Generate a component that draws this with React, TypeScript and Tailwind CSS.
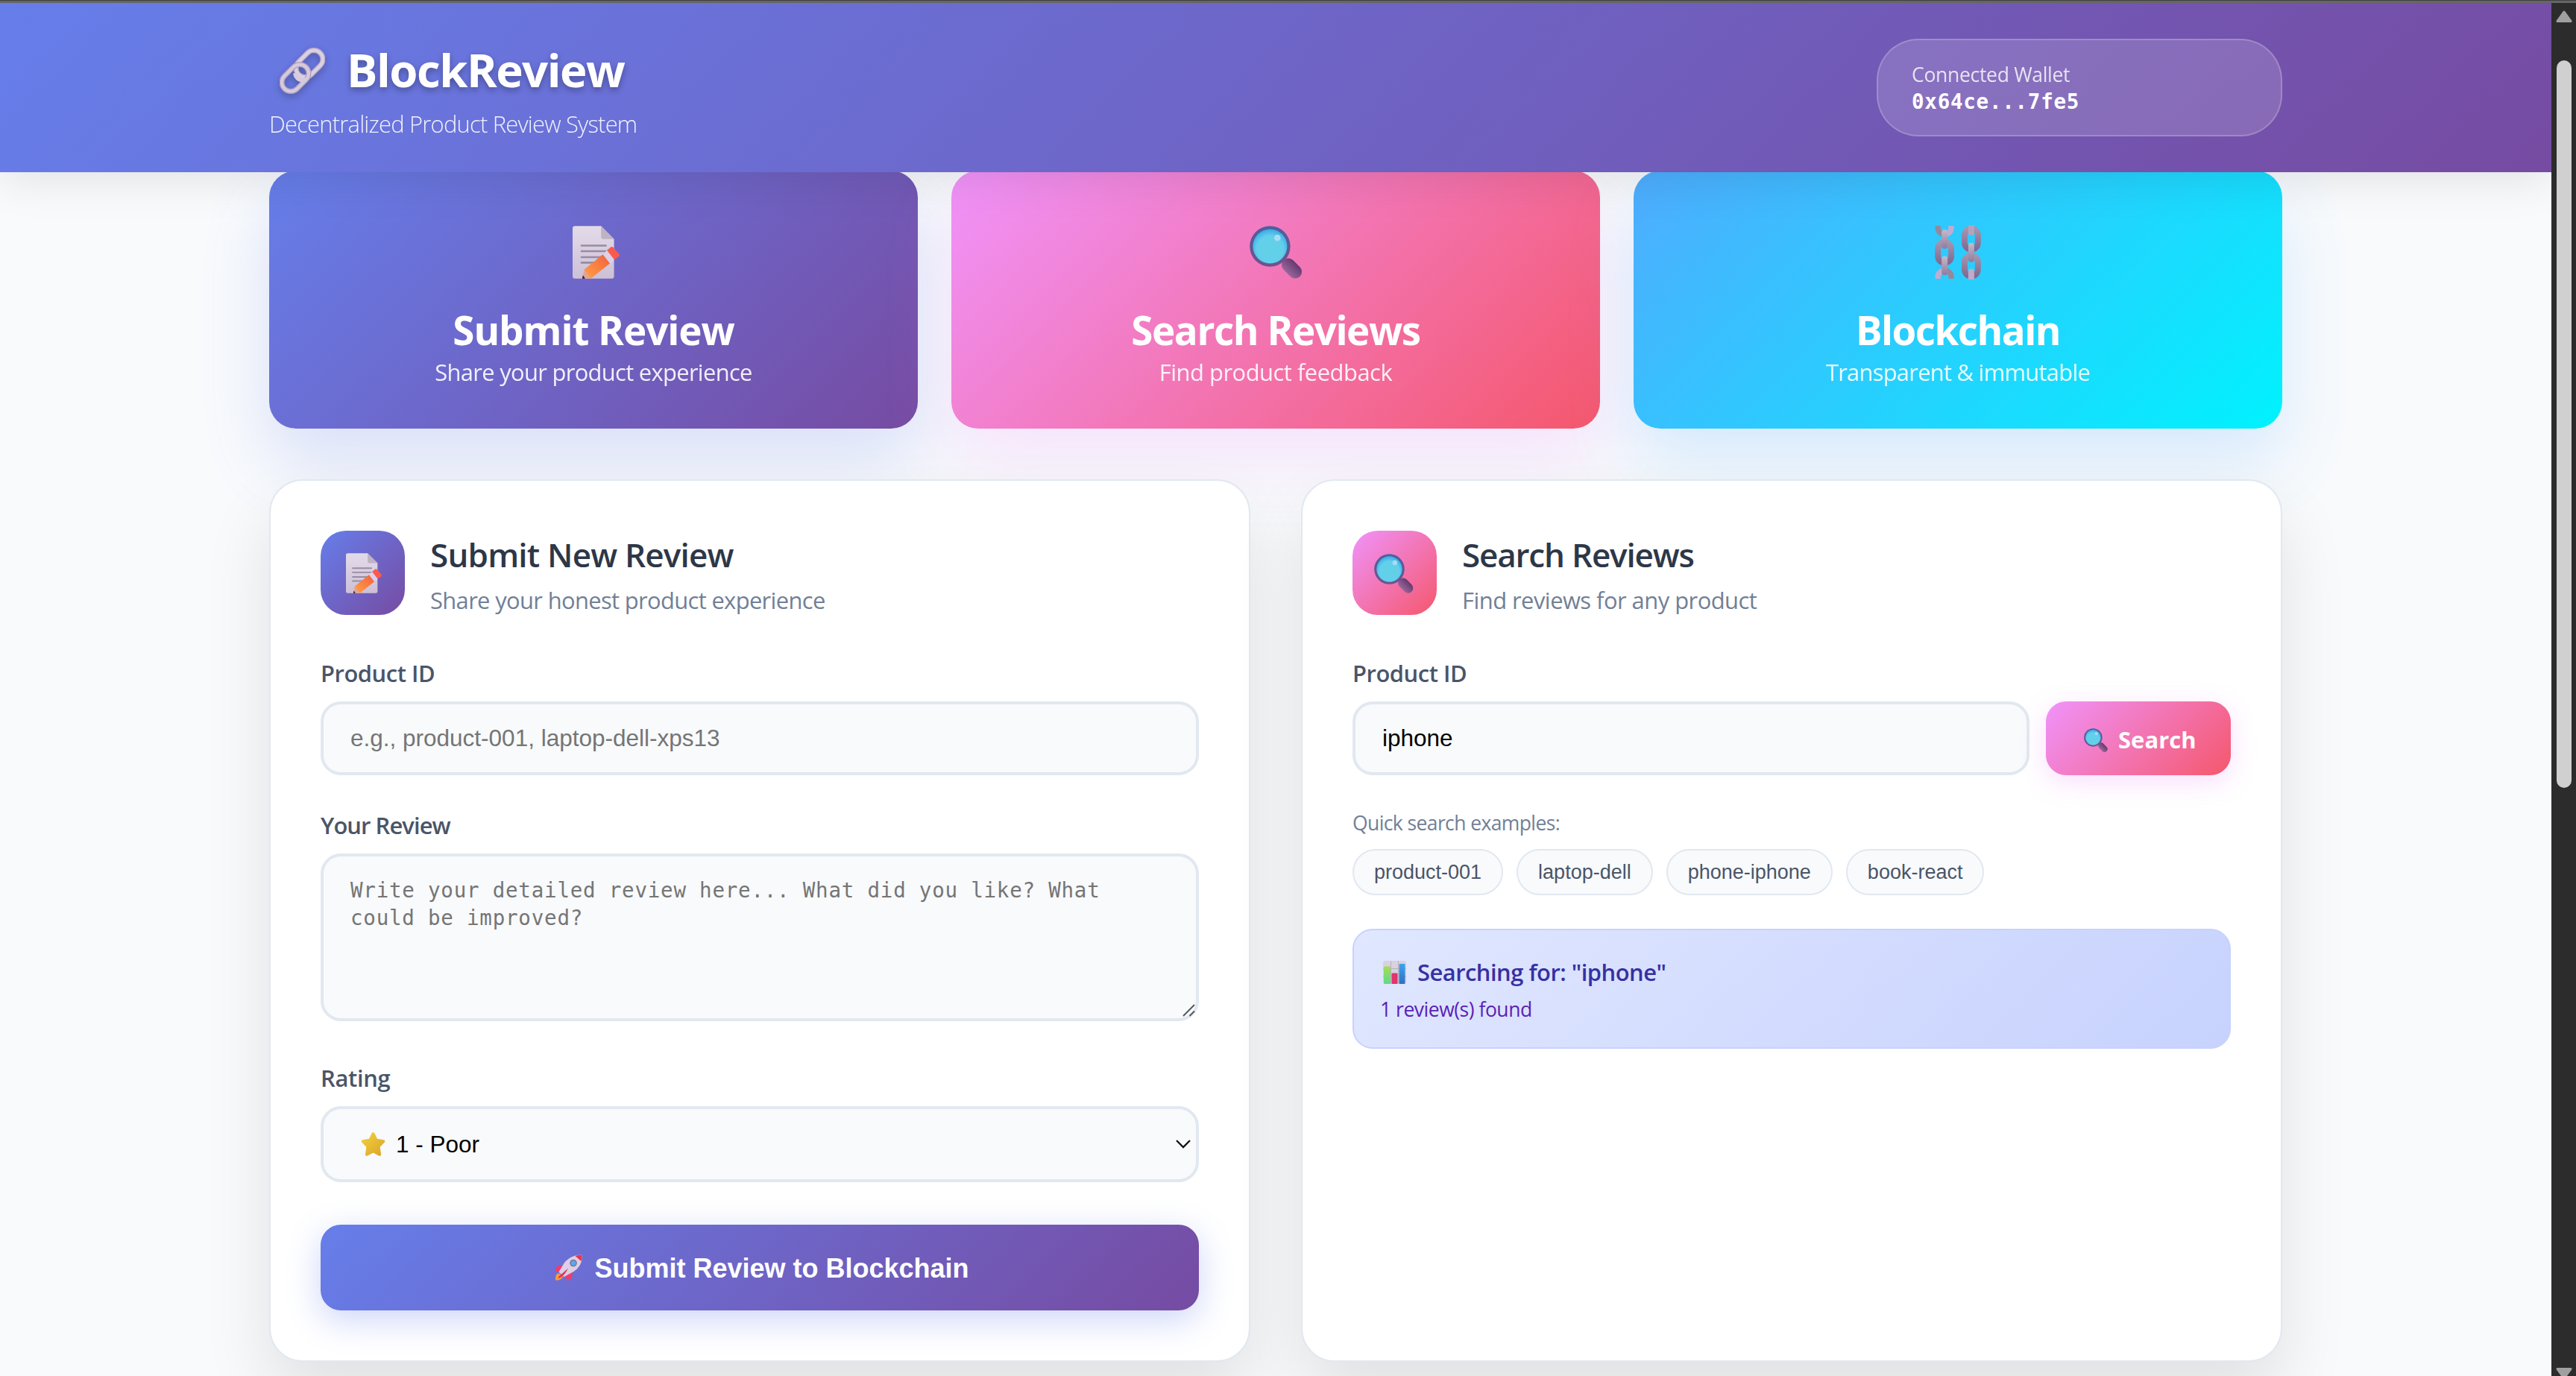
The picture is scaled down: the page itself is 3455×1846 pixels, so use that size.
import type { ReactNode } from "react";

function LinkIcon({ className }: { className: string }) {
  return (
    <svg viewBox="0 0 61 62" className={className} fill="none">
      <g transform="rotate(-45 40 21.5)">
        <rect x="19.5" y="9.5" width="41" height="24" rx="12" stroke="#bdaec8" strokeWidth="7" />
        <rect x="19.5" y="9.5" width="41" height="24" rx="12" stroke="#dbd1e2" strokeWidth="4" />
      </g>
      <g transform="rotate(-45 21 40.5)">
        <rect x="0.5" y="28.5" width="41" height="24" rx="12" stroke="#b3a3bf" strokeWidth="7" />
        <rect x="0.5" y="28.5" width="41" height="24" rx="12" stroke="#d6cbde" strokeWidth="4" />
      </g>
      <path d="M21 34c1 7 7 11 14 9" stroke="#d6cbde" strokeWidth="6" />
    </svg>
  );
}

function MemoIcon({ className }: { className: string }) {
  return (
    <svg viewBox="0 0 63.5 71" className={className}>
      <defs>
        <linearGradient id="mpage" x1="0" y1="0" x2="0" y2="1">
          <stop offset="0" stopColor="#e3dbe9" />
          <stop offset="1" stopColor="#cdc0d6" />
        </linearGradient>
        <linearGradient id="mpen" x1="0" y1="1" x2="1" y2="0">
          <stop offset="0.1" stopColor="#ff9a45" />
          <stop offset="1" stopColor="#f2603c" />
        </linearGradient>
      </defs>
      <path d="M3 0H38.5L56 17.5V68a3 3 0 0 1-3 3H3a3 3 0 0 1-3-3V3a3 3 0 0 1 3-3Z" fill="url(#mpage)" />
      <path d="M38.5 0 56 17.5H41a2.500 2.500 0 0 1-2.500-2.500Z" fill="#bdb3c4" />
      <g stroke="#968da3" strokeWidth="2.600" strokeLinecap="round">
        <path d="M12 26.500H45M12 34H45M12 42H38M12 49.500H29" />
      </g>
      <path d="M13 71 15.800 58.500 25 71Z" fill="#e3a48f" />
      <path d="M13 71 14 66.500 17 71Z" fill="#35143f" />
      <path d="M15.800 58.700 41 38.300 50.500 50.300 24.600 71Z" fill="url(#mpen)" />
      <path d="M41 38.300 46.400 32.700 56.300 45.300 50.500 50.300Z" fill="#ddd0ea" />
      <path d="M46.400 32.700 51.500 28.500Q53.500 27.300 55 29L62.500 37.200Q64 39 62.500 41L56.300 45.300Z" fill="#fb5a4b" />
    </svg>
  );
}

function LensIcon({ className }: { className: string }) {
  return (
    <svg viewBox="0 0 71 71" className={className}>
      <defs>
        <linearGradient id="lring" x1="0" y1="0" x2="0" y2="1">
          <stop offset="0" stopColor="#48629c" />
          <stop offset="1" stopColor="#74508c" />
        </linearGradient>
        <radialGradient id="lglass" cx="0.5" cy="0.58" r="0.55">
          <stop offset="0.7" stopColor="#63d0ea" />
          <stop offset="1" stopColor="#41aeea" />
        </radialGradient>
        <linearGradient id="lhand" x1="0" y1="0" x2="0" y2="1">
          <stop offset="0" stopColor="#653a70" />
          <stop offset="1" stopColor="#9a6699" />
        </linearGradient>
      </defs>
      <rect x="41" y="48" width="31" height="18" rx="9" transform="rotate(45 56.500 57)" fill="url(#lhand)" />
      <circle cx="27.400" cy="27.500" r="27.200" fill="url(#lring)" />
      <circle cx="27.400" cy="27.500" r="23" fill="url(#lglass)" />
      <circle cx="37.300" cy="16" r="4.300" fill="#a9dcf3" />
    </svg>
  );
}

function ChainsIcon({ className }: { className: string }) {
  return (
    <svg viewBox="0 0 62 73.500" className={className} fill="none">
      <defs>
        <linearGradient id="cbig" x1="0" y1="0" x2="0" y2="1">
          <stop offset="0" stopColor="#a595ae" />
          <stop offset="1" stopColor="#806a92" />
        </linearGradient>
        <linearGradient id="csm" x1="0" y1="0" x2="0" y2="1">
          <stop offset="0" stopColor="#c3bccb" />
          <stop offset="1" stopColor="#8f7a9e" />
        </linearGradient>
      </defs>
      <path d="M4 1V3C4 9 8 12.500 13 12.500" stroke="#94899c" strokeWidth="7.500" />
      <path d="M22 1V3C22 9 18 12.500 13 12.500" stroke="#c0acd3" strokeWidth="7.500" />
      <path d="M4 72.500V70C4 65 8 61.500 13 61.500" stroke="#c0acd3" strokeWidth="7.500" />
      <path d="M22 72.500V70C22 65 18 61.500 13 61.500" stroke="#94899c" strokeWidth="7.500" />
      <rect x="4" y="23" width="18" height="28" rx="9" stroke="url(#cbig)" strokeWidth="8" />
      <rect x="40" y="4.800" width="18" height="28" rx="9" stroke="url(#cbig)" strokeWidth="8" />
      <rect x="40" y="41" width="18" height="28" rx="9" stroke="url(#cbig)" strokeWidth="8" />
      <g fill="url(#csm)">
        <rect x="9" y="6" width="8" height="26" rx="4" />
        <rect x="9" y="41.700" width="8" height="26" rx="4" />
        <rect x="45" y="24" width="8" height="26" rx="4" />
      </g>
      <path d="M45 0H53V10a4 4 0 0 1-8 0Z" fill="#b3a3bf" />
      <path d="M45 73.500H53V63a4 4 0 0 0-8 0Z" fill="#bfabcb" />
    </svg>
  );
}

function ChartIcon({ className }: { className: string }) {
  return (
    <svg viewBox="0 0 31 31" className={className}>
      <defs>
        <linearGradient id="gbar" x1="0" y1="0" x2="0" y2="1">
          <stop offset="0" stopColor="#a5dd55" />
          <stop offset="1" stopColor="#5ed98a" />
        </linearGradient>
        <linearGradient id="bbar" x1="0" y1="0" x2="0" y2="1">
          <stop offset="0" stopColor="#3aa5ee" />
          <stop offset="1" stopColor="#2f6fc4" />
        </linearGradient>
      </defs>
      <rect width="31" height="31" rx="3" fill="#d8d1de" />
      <path d="M10.500 0V31M20.500 0V31M0 10.500H31M0 21H31" stroke="#b9b0c1" strokeWidth="1" />
      <rect x="1" y="7.500" width="9" height="23.500" rx="1" fill="url(#gbar)" />
      <rect x="11.500" y="16.500" width="8" height="14.500" rx="1" fill="#e2336f" />
      <rect x="21.500" y="4" width="8" height="27" rx="1" fill="url(#bbar)" />
    </svg>
  );
}

function StarIcon({ className }: { className: string }) {
  return (
    <svg viewBox="0 0 32 32" className={className}>
      <defs>
        <linearGradient id="star" x1="0" y1="0" x2="1" y2="1">
          <stop offset="0" stopColor="#f3cf3a" />
          <stop offset="1" stopColor="#dba62c" />
        </linearGradient>
      </defs>
      <path
        d="M16 2.200 20 10.300 29.300 11.800 22.800 18.600 24.300 28.800 16 24.500 7.700 28.800 9.200 18.600 2.700 11.800 12 10.300Z"
        fill="url(#star)"
        stroke="url(#star)"
        strokeWidth="4"
        strokeLinejoin="round"
      />
    </svg>
  );
}

function RocketIcon({ className }: { className: string }) {
  return (
    <svg viewBox="0 0 37 35" className={className}>
      <path d="M1 34.500Q0 27 5 25L11.500 29Q9 35 1 34.500Z" fill="#fb9a3c" />
      <path d="M1 19Q4 12.500 15 15.500L10 23 1 22Q0 20.500 1 19Z" fill="#ee3d6d" />
      <path d="M20 34Q26 29 22.500 20L13 26 16.500 34Q18 35.500 20 34Z" fill="#ee3d6d" />
      <path d="M36.500 0.500Q38 14 26 22.500L12.500 30 5.500 23.500 13 11Q22 0 36.500 0.500Z" fill="#dccfe6" />
      <path d="M36.500 0.500Q37 5 35.500 9L27.500 2Q31 0.300 36.500 0.500Z" fill="#e8354f" />
      <path d="M18 18.500 5.500 29.500Q3.500 31.500 6.500 31.500 13 29 18 18.500Z" fill="#e2315f" />
      <circle cx="25" cy="11.500" r="4.800" fill="#7c7390" />
      <circle cx="25" cy="11.500" r="3.300" fill="#58a8f2" />
    </svg>
  );
}

function ActionCard({
  icon,
  title,
  text,
  className,
  titleClass,
  textClass,
}: {
  icon: ReactNode;
  title: string;
  text: string;
  className: string;
  titleClass: string;
  textClass: string;
}) {
  return (
    <div className={`flex h-[346px] flex-1 flex-col items-center rounded-[36px] pt-[73px] text-white ${className}`}>
      <div className="flex h-[73px] items-center">{icon}</div>
      <h3 className={`mt-[31px] text-[52.900px] leading-[72px] font-bold ${titleClass}`}>{title}</h3>
      <p className={`text-[30.900px] leading-[42px] opacity-90 ${textClass}`}>{text}</p>
    </div>
  );
}

function Panel({ children }: { children: ReactNode }) {
  return (
    <section className="h-[1184px] w-[1316px] rounded-[45px] border-2 border-[#e2e8f0] bg-white px-[67px] pt-[67px] shadow-[0_45px_90px_rgba(0,0,0,0.1)]">
      {children}
    </section>
  );
}

function PanelHeader({
  icon,
  title,
  text,
  iconClass,
  titleClass,
  textClass,
}: {
  icon: ReactNode;
  title: string;
  text: string;
  iconClass: string;
  titleClass: string;
  textClass: string;
}) {
  return (
    <div className="mb-[57px] flex h-[113px] gap-[34px]">
      <div className={`flex size-[113px] items-center justify-center rounded-[34px] ${iconClass}`}>{icon}</div>
      <div className="pt-[2px]">
        <h2 className={`text-[44px] leading-[60px] font-semibold text-[#2d3748] ${titleClass}`}>{title}</h2>
        <p className={`mt-[10px] text-[30.900px] leading-[42px] text-[#718096] ${textClass}`}>{text}</p>
      </div>
    </div>
  );
}

function Label({ children, className }: { children: ReactNode; className: string }) {
  return (
    <label className={`mb-[17px] block text-[30.900px] leading-[42px] font-semibold text-[#4a5568] ${className}`}>
      {children}
    </label>
  );
}

const chips = ["product-001", "laptop-dell", "phone-iphone", "book-react"];

export default function App() {
  return (
    <div className="flex h-[1846px] w-[3455px] flex-col overflow-hidden bg-[#f8fafc] font-['Open_Sans',sans-serif]">
      <div className="h-[4px] shrink-0 border-t border-[#3f3f3f] bg-[#666666]" />
      <div className="flex min-h-0 flex-1">
        <div className="w-[3422px] overflow-hidden">
          <header className="relative z-10 flex h-[227px] justify-between bg-[linear-gradient(135deg,#667eea_0%,#764ba2_100%)] px-[361px] text-white shadow-[0_9px_56px_rgba(0,0,0,0.1)]">
            <div className="pt-[47px]">
              <div className="flex h-[84px] items-center pl-[14px]">
                <LinkIcon className="mt-[4px] h-[62px] w-[61px] drop-shadow-[0_4px_5px_rgba(0,0,0,0.25)]" />
                <h1 className="ml-[29px] text-[61.700px] leading-[84px] font-bold tracking-[-1.500px] [text-shadow:0_4px_9px_rgba(0,0,0,0.3)]">
                  BlockReview
                </h1>
              </div>
              <p className="mt-[10px] text-[30.900px] leading-[42px] font-light tracking-[-0.780px] opacity-90">
                Decentralized Product Review System
              </p>
            </div>
            <div className="mt-[48px] h-[131px] w-[544px] rounded-[56px] border-2 border-white/20 bg-white/15 px-[45px] pt-[28px]">
              <div className="text-[26.500px] leading-[36px] tracking-[-0.300px] opacity-80">Connected Wallet</div>
              <div className="mt-[2px] font-['DejaVu_Sans_Mono',monospace] text-[27.500px] leading-[32px] font-bold tracking-[0.760px]">
                0x64ce...7fe5
              </div>
            </div>
          </header>

          <main className="-mt-[2px] px-[361px]">
            <div className="flex gap-[45px]">
              <ActionCard
                icon={<MemoIcon className="ml-[6px] h-[71px] w-[63px]" />}
                title="Submit Review"
                text="Share your product experience"
                className="bg-[linear-gradient(135deg,#667eea_0%,#764ba2_100%)] shadow-[0_45px_90px_rgba(102,126,234,0.2)]"
                titleClass="tracking-[-1.050px]"
                textClass="tracking-[-0.680px]"
              />
              <ActionCard
                icon={<LensIcon className="size-[71px]" />}
                title="Search Reviews"
                text="Find product feedback"
                className="bg-[linear-gradient(135deg,#f093fb_0%,#f5576c_100%)] shadow-[0_45px_90px_rgba(240,147,251,0.2)]"
                titleClass="tracking-[-1.420px]"
                textClass="tracking-[-0.480px]"
              />
              <ActionCard
                icon={<ChainsIcon className="h-[73px] w-[62px]" />}
                title="Blockchain"
                text="Transparent & immutable"
                className="bg-[linear-gradient(135deg,#4facfe_0%,#00f2fe_100%)] shadow-[0_45px_90px_rgba(79,172,254,0.2)]"
                titleClass="tracking-[-1.500px]"
                textClass="tracking-[-0.740px]"
              />
            </div>

            <div className="mt-[68px] flex justify-between">
              <Panel>
                <PanelHeader
                  icon={<MemoIcon className="ml-[3px] h-[54px] w-[48px]" />}
                  title="Submit New Review"
                  text="Share your honest product experience"
                  iconClass="bg-[linear-gradient(135deg,#667eea_0%,#764ba2_100%)]"
                  titleClass="tracking-[-0.800px]"
                  textClass="tracking-[-0.640px]"
                />
                <Label className="tracking-[-0.450px]">Product ID</Label>
                <input
                  placeholder="e.g., product-001, laptop-dell-xps13"
                  className="block h-[99px] w-full rounded-[27px] border-4 border-[#e2e8f0] bg-[#f8fafc] px-[36px] font-['Liberation_Sans',sans-serif] text-[31.500px] text-black placeholder:text-[#757575]"
                />
                <Label className="mt-[46px] tracking-[-0.900px]">Your Review</Label>
                <div className="relative">
                  <textarea
                    placeholder="Write your detailed review here... What did you like? What could be improved?"
                    className="block h-[225px] w-full resize-none rounded-[27px] border-4 border-[#e2e8f0] bg-[#f8fafc] px-[36px] pt-[27px] font-['DejaVu_Sans_Mono',monospace] text-[27.500px] leading-[37px] tracking-[0.780px] placeholder:text-[#757575]"
                  />
                  <svg viewBox="0 0 17 17" className="absolute right-[5px] bottom-[6px] size-[17px]">
                    <path d="M1 16 16 1M9.500 16 16 9.500" stroke="#58595b" strokeWidth="2" />
                  </svg>
                </div>
                <Label className="mt-[55px] tracking-[-0.300px]">Rating</Label>
                <div className="flex h-[102px] items-center rounded-[27px] border-4 border-[#e2e8f0] bg-[#f8fafc] pr-[7px] pl-[50px]">
                  <StarIcon className="size-[33px]" />
                  <span className="ml-[14px] flex-1 font-['Liberation_Sans',sans-serif] text-[31.500px] leading-[36px] text-black">
                    1 - Poor
                  </span>
                  <svg viewBox="0 0 20 12" className="h-[12px] w-[20px]" fill="none">
                    <path d="M1 1 10 10 19 1" stroke="#111" strokeWidth="2.300" />
                  </svg>
                </div>
                <button className="mt-[57px] flex h-[115px] w-full items-center justify-center rounded-[27px] bg-[linear-gradient(135deg,#667eea_0%,#764ba2_100%)] pl-[6px] font-['Liberation_Sans',sans-serif] text-[36px] font-bold text-white shadow-[0_13px_45px_rgba(102,126,234,0.33)]">
                  <RocketIcon className="mr-[16px] h-[35px] w-[37px]" />
                  <span className="pt-[3px]">Submit Review to Blockchain</span>
                </button>
              </Panel>

              <Panel>
                <PanelHeader
                  icon={<LensIcon className="mt-[2px] mr-[2px] size-[53px]" />}
                  title="Search Reviews"
                  text="Find reviews for any product"
                  iconClass="bg-[linear-gradient(135deg,#f093fb_0%,#f5576c_100%)]"
                  titleClass="tracking-[-1.180px]"
                  textClass="tracking-[-0.520px]"
                />
                <Label className="tracking-[-0.450px]">Product ID</Label>
                <div className="flex gap-[22px]">
                  <input
                    defaultValue="iphone"
                    className="h-[99px] min-w-0 flex-1 rounded-[27px] border-4 border-[#e2e8f0] bg-[#f8fafc] px-[36px] font-['Liberation_Sans',sans-serif] text-[31.500px] text-black"
                  />
                  <button className="flex h-[99px] w-[248px] items-center rounded-[27px] bg-[linear-gradient(135deg,#f093fb_0%,#f5576c_100%)] pl-[51px] text-[30.900px] font-bold text-white shadow-[0_9px_34px_rgba(240,147,251,0.3)]">
                    <LensIcon className="mt-[4px] size-[32px]" />
                    <span className="mt-[3px] ml-[14px] tracking-[0.100px]">Search</span>
                  </button>
                </div>
                <p className="mt-[46px] text-[26.500px] leading-[36px] tracking-[-0.600px] text-[#718096]">
                  Quick search examples:
                </p>
                <div className="mt-[17px] flex gap-[18px]">
                  {chips.map((chip) => (
                    <button
                      key={chip}
                      className="h-[62px] rounded-full border-2 border-[#e2e8f0] bg-[#f8fafc] px-[27px] font-['Liberation_Sans',sans-serif] text-[27px] text-[#4a5568]"
                    >
                      {chip}
                    </button>
                  ))}
                </div>
                <div className="mt-[45px] h-[161px] rounded-[27px] border-2 border-[#c7d2fe] bg-[linear-gradient(135deg,#e0e7ff_0%,#c7d2fe_100%)] px-[35px] pt-[35px]">
                  <div className="flex h-[42px] items-center">
                    <ChartIcon className="ml-[4px] size-[31px]" />
                    <span className="ml-[15px] text-[30.900px] leading-[42px] font-semibold tracking-[-0.500px] text-[#3730a3]">
                      Searching for: "iphone"
                    </span>
                  </div>
                  <p className="mt-[11px] text-[26.500px] leading-[36px] tracking-[-0.480px] text-[#5b21b6]">
                    1 review(s) found
                  </p>
                </div>
              </Panel>
            </div>
          </main>
        </div>

        <div className="flex w-[33px] flex-col items-center overflow-hidden bg-[#2c2c2c] pt-[10px]">
          <svg viewBox="0 0 22 17" className="ml-[1px] h-[17px] w-[22px] shrink-0">
            <path d="M11 2 20 14.500H2Z" fill="#a0a0a0" stroke="#a0a0a0" strokeWidth="3" strokeLinejoin="round" />
          </svg>
          <div className="mt-[50px] ml-[1px] h-[976px] w-[20px] shrink-0 rounded-full bg-[#d0d0d0]" />
          <svg viewBox="0 0 22 17" className="mt-[777px] ml-[1px] h-[17px] w-[22px] shrink-0">
            <path d="M11 15 20 2.500H2Z" fill="#a0a0a0" stroke="#a0a0a0" strokeWidth="3" strokeLinejoin="round" />
          </svg>
        </div>
      </div>
    </div>
  );
}
